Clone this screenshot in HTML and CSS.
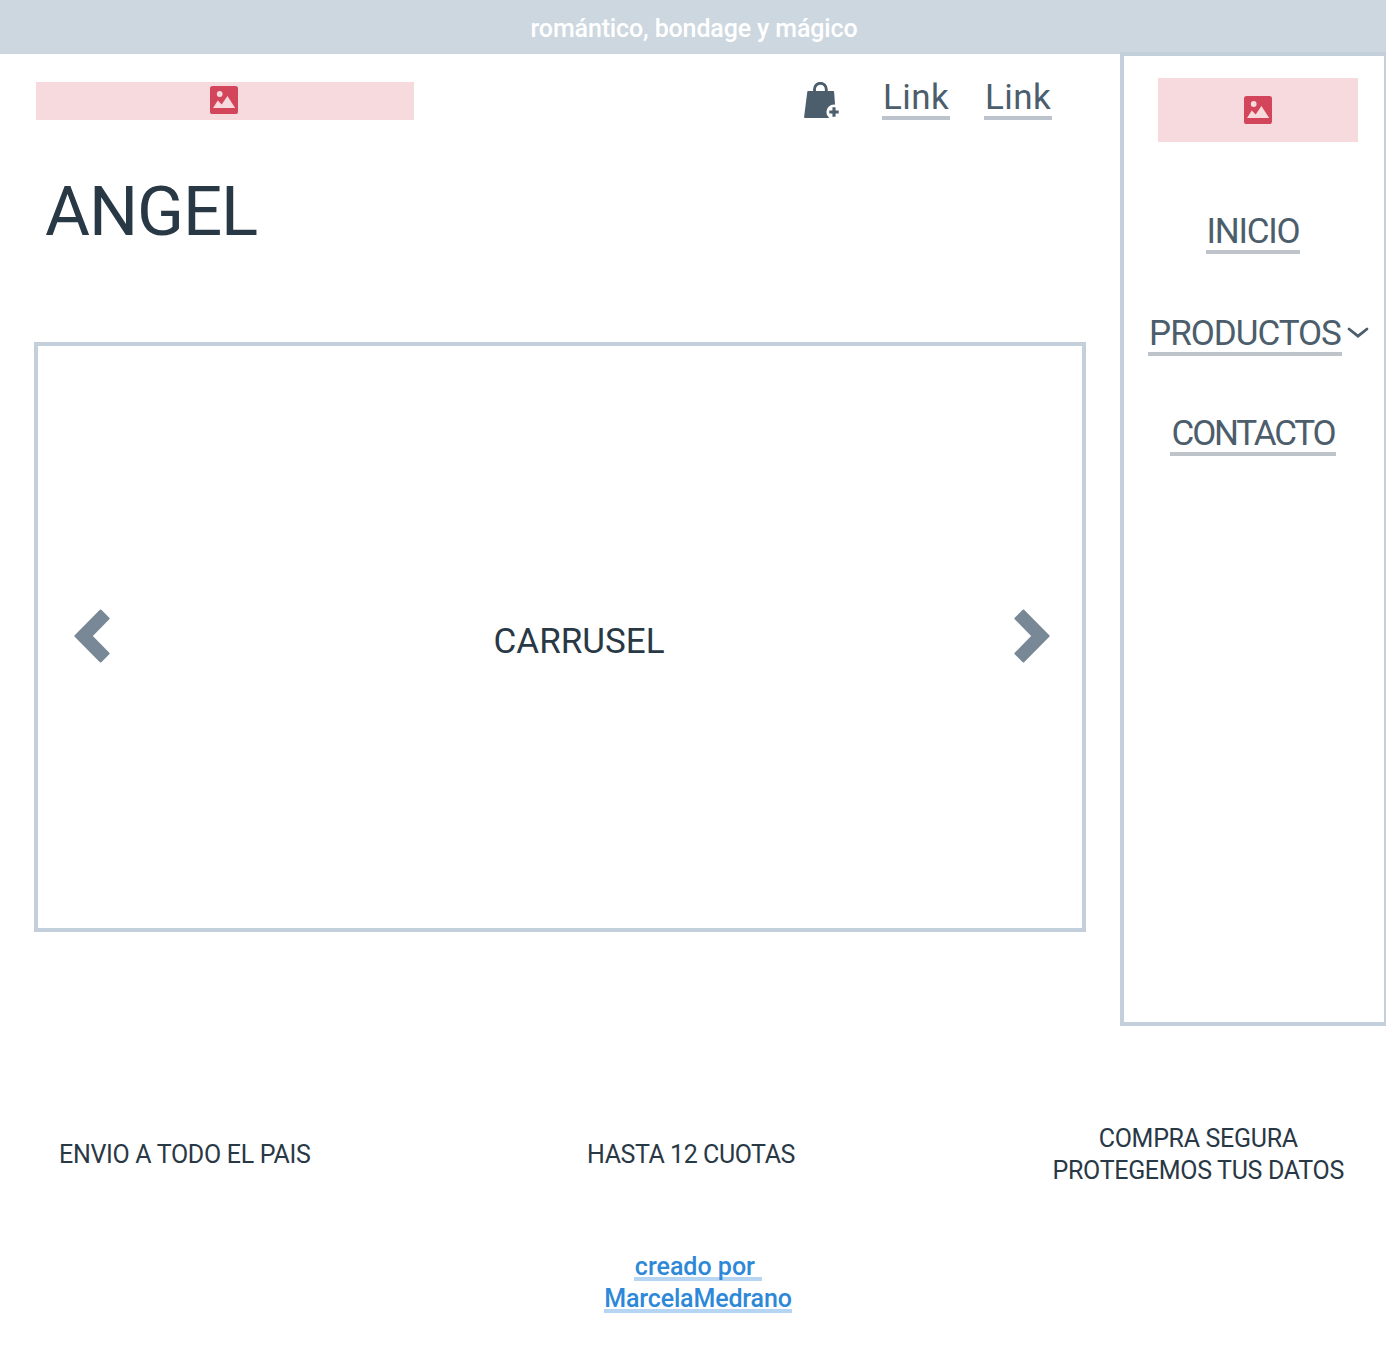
FILE: index.html
```
<!DOCTYPE html>
<html lang="es">
<head>
<meta charset="utf-8">
<title>Angel</title>
<link rel="stylesheet" href="styles.css">
</head>
<body>
<svg class="sprite" aria-hidden="true">
  <symbol id="picture" viewBox="0 0 28 28">
    <rect width="28" height="28" rx="2.6" fill="#d3455b"/>
    <circle cx="9.7" cy="8" r="2.9" fill="#f7dade"/>
    <path d="M3 22l4.8-7.6 3.9 4.1L17.4 10 25.2 22z" fill="#f7dade"/>
  </symbol>
</svg>

<div class="announcement">romántico, bondage y mágico</div>

<div class="page">
  <main class="main">
    <header class="header">
      <div class="logo"><svg class="picture"><use href="#picture"/></svg></div>
      <nav class="actions">
        <svg class="bag" viewBox="0 0 36 36" aria-label="Agregar a la bolsa">
          <path d="M10.5 11V7.2a5.9 5.9 0 0 1 11.8 0V11" fill="none" stroke="#4c5d6b" stroke-width="2.9"/>
          <path d="M4.2 9H29.2Q30 9 30.1 9.8L31.9 35Q32 36 31 36H1Q0 36 .1 35L3.3 9.8Q3.4 9 4.2 9z" fill="#4c5d6b"/>
          <circle cx="30" cy="30" r="7.6" fill="#fff"/>
          <path d="M30 25.3v9.4M25.3 30h9.4" stroke="#4c5d6b" stroke-width="3.1"/>
        </svg>
        <a class="link link-action">Link</a>
        <a class="link link-action">Link</a>
      </nav>
    </header>
    <h1 class="title">ANGEL</h1>
    <section class="carousel">
      <svg class="arrow" viewBox="0 0 36 54"><path d="M26.6 1.5L34.6 9.5 17.4 27 34.6 44.5 26.6 52.5 1.4 27z" fill="#788896" stroke="#788896" stroke-width="2" stroke-linejoin="round"/></svg>
      <span class="carousel-label">CARRUSEL</span>
      <svg class="arrow" viewBox="0 0 36 54"><path d="M9.4 1.5L1.4 9.5 18.6 27 1.4 44.5 9.4 52.5 34.6 27z" fill="#788896" stroke="#788896" stroke-width="2" stroke-linejoin="round"/></svg>
    </section>
  </main>
  <aside class="sidebar">
    <div class="side-logo"><svg class="picture"><use href="#picture"/></svg></div>
    <nav class="menu">
      <a class="link inicio">INICIO</a>
      <div class="menu-group">
        <a class="link productos">PRODUCTOS</a>
        <svg class="chevron" viewBox="0 0 22 14"><path d="M2 3L11 10.2 20 3" fill="none" stroke="#4c5d6b" stroke-width="2.8" stroke-linecap="round"/></svg>
      </div>
      <a class="link contacto">CONTACTO</a>
    </nav>
  </aside>
</div>

<section class="benefits">
  <p class="benefit shipping">ENVIO A TODO EL PAIS</p>
  <p class="benefit payments">HASTA 12 CUOTAS</p>
  <p class="benefit security">COMPRA SEGURA<br>PROTEGEMOS TUS DATOS</p>
</section>

<footer class="footer">
  <a class="credit"><span class="credit-top">creado por&nbsp;</span><br><span class="credit-name">MarcelaMedrano</span></a>
</footer>
</body>
</html>
```
FILE: styles.css
```
* { box-sizing: border-box; }

body {
  margin: 0;
  width: 1386px;
  height: 1346px;
  overflow: hidden;
  background: #fff;
  color: #293845;
  font-family: Roboto, "Liberation Sans", sans-serif;
}

.sprite { display: none; }

.announcement {
  height: 54px;
  padding: 13px 0 0 2px;
  background: #cdd7e0;
  color: #fff;
  font-size: 25px;
  font-weight: 500;
  line-height: 31px;
  letter-spacing: -.13px;
  text-align: center;
}

.page {
  display: grid;
  grid-template-columns: 1120px 266px;
  height: 972px;
}

.main { padding: 28px 34px 0; }

.header {
  display: flex;
  justify-content: space-between;
  height: 38px;
  padding-left: 2px;
}

.logo, .side-logo {
  display: flex;
  align-items: center;
  justify-content: center;
  background: #f7dade;
}
.logo { width: 378px; height: 38px; padding: 0 2px 2px 0; }
.side-logo { width: 200px; height: 64px; margin: 22px 0 0 34px; }
.picture { width: 28px; height: 28px; }

.actions { display: flex; gap: 34px; margin-right: 34px; }
.bag { width: 36px; height: 36px; margin-right: 8px; }

.link {
  display: block;
  height: 42px;
  border-bottom: 4px solid #bec4c9;
  color: #4c5d6b;
  font-size: 35px;
  line-height: 40px;
  text-align: center;
  white-space: nowrap;
}
.link-action {
  width: 68px;
  margin-top: -4px;
  border-color: #bdc3cd;
  letter-spacing: .44px;
}

.title {
  margin: 50px 0 0 11px;
  font-size: 69px;
  font-weight: 400;
  line-height: 83px;
  letter-spacing: -1.1px;
}

.carousel {
  display: flex;
  align-items: center;
  justify-content: space-between;
  height: 590px;
  margin-top: 89px;
  padding: 0 32px 2px 36px;
  border: 4px solid #c3d0db;
}
.arrow { width: 36px; height: 54px; }
.carousel-label {
  margin: 12px 0 0 34px;
  font-size: 35px;
  line-height: 40px;
}

.sidebar {
  height: 974px;
  margin-top: -2px;
  border: 4px solid #c3d0db;
  border-right-width: 2px;
}
.menu {
  display: flex;
  flex-direction: column;
  padding: 70px 0 0 24px;
}
.menu-group { display: flex; margin: 60px 0 58px; }
.inicio { width: 94px; margin-left: 58px; letter-spacing: -1.26px; }
.productos { width: 194px; letter-spacing: -1.02px; }
.contacto { width: 166px; margin-left: 22px; letter-spacing: -2.17px; }
.chevron { width: 22px; height: 14px; margin: 12px 0 0 5px; }

.benefits {
  display: flex;
  align-items: center;
  justify-content: space-between;
  height: 64px;
  margin-top: 97px;
  padding: 0 42px 0 59px;
}
.benefit {
  margin: 0;
  font-size: 25px;
  line-height: 32px;
  letter-spacing: -.31px;
  text-align: center;
}
.payments { margin-left: 19px; letter-spacing: -.44px; }

.footer {
  display: flex;
  justify-content: center;
  margin-top: 64px;
  padding-left: 10px;
}
.credit {
  color: #2d88d8;
  font-size: 25px;
  font-weight: 500;
  line-height: 32px;
  text-align: center;
}
.credit span {
  display: inline-block;
  height: 32px;
  background: linear-gradient(#b5d5f2, #b5d5f2) 0 26px / 100% 4px no-repeat;
  vertical-align: top;
}
.credit-top { width: 128px; }
.credit-name { width: 188px; letter-spacing: -.15px; }
```
